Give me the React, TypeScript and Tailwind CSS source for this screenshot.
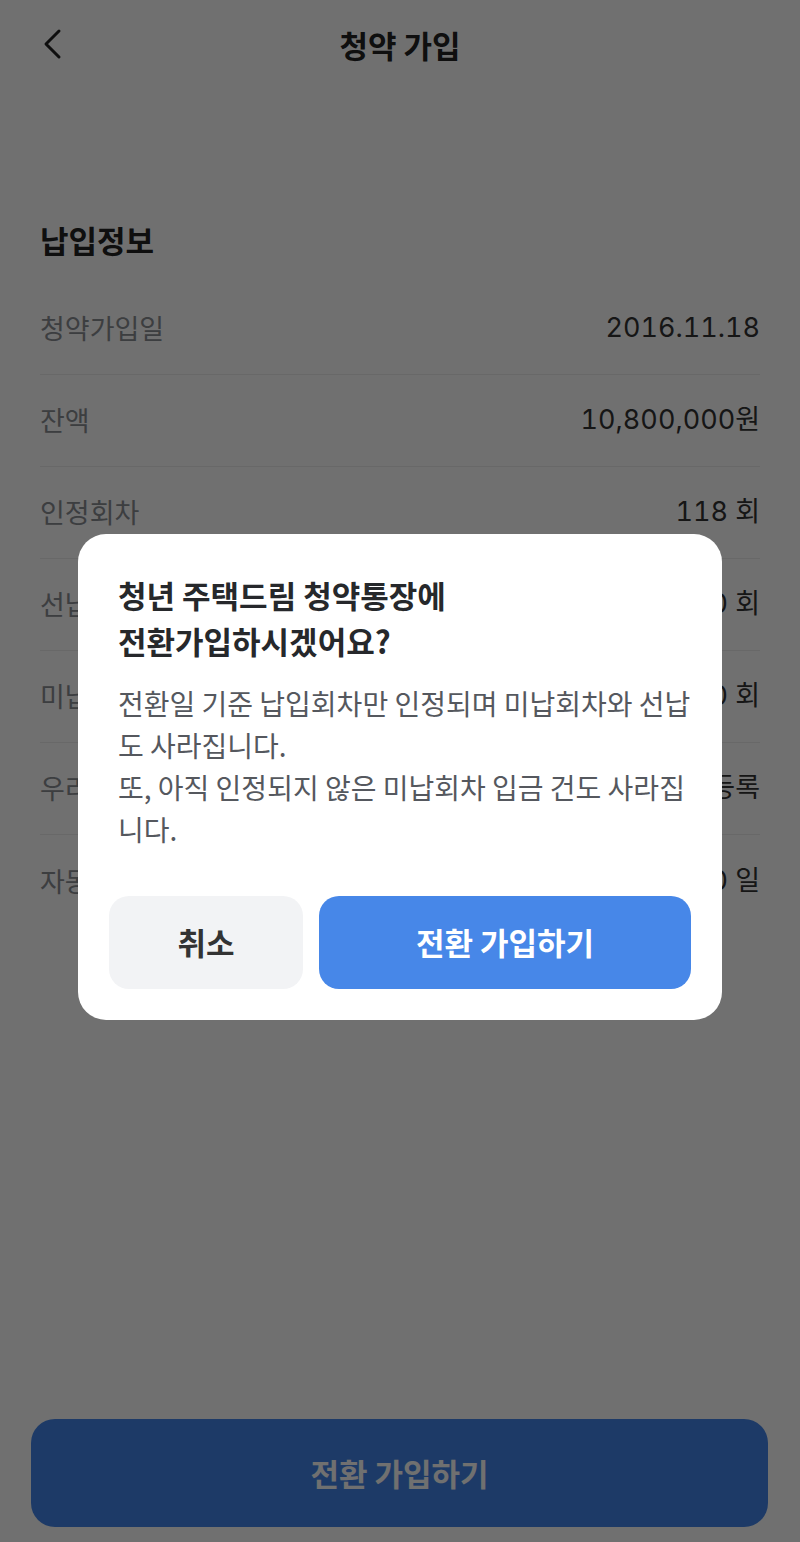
const rows = [
  { label: "청약가입일", value: "2016.11.18" },
  { label: "잔액", value: "10,800,000원" },
  { label: "인정회차", value: "118 회" },
  { label: "선납회차", value: "0 회" },
  { label: "미납회차", value: "0 회" },
  { label: "우리집 청약 알림", value: "미등록" },
  { label: "자동이체일", value: "10 일" },
];

function BackIcon() {
  return (
    <svg width="24" height="32" viewBox="0 0 24 32" fill="none">
      <path d="M19 3 L6 16 L19 29" stroke="#222" strokeWidth="3" strokeLinecap="round" strokeLinejoin="round" />
    </svg>
  );
}

export default function App() {
  return (
    <div className="relative h-[1542px] w-[800px] overflow-hidden bg-white font-['Noto_Sans_CJK_KR','Noto_Sans',sans-serif] text-[#222]">
      {/* page behind the dialog */}
      <header className="relative flex h-[88px] items-center justify-center">
        <button type="button" className="absolute left-[40px] top-[28px]">
          <BackIcon />
        </button>
        <h1 className="text-[31px] font-semibold leading-none">청약 가입</h1>
      </header>

      <section className="px-10 pt-[132px]">
        <h2 className="text-[31px] font-bold leading-[40px]">납입정보</h2>
        <ul className="mt-[23px]">
          {rows.map((row, i) => (
            <li
              key={row.label}
              className={`flex h-[92px] items-center justify-between ${i < rows.length - 1 ? "border-b border-[#ededed]" : ""}`}
            >
              <span className="whitespace-nowrap text-[27px] text-[#8a8d93]">{row.label}</span>
              <span className="whitespace-nowrap font-['Inter','Noto_Sans_CJK_KR',sans-serif] text-[27px] tabular-nums text-[#333]">
                {row.value}
              </span>
            </li>
          ))}
        </ul>
      </section>

      <div className="absolute bottom-[15px] left-[31px] right-[32px]">
        <button
          type="button"
          className="flex h-[108px] w-full items-center justify-center rounded-[24px] bg-[#4385ea] text-[31px] font-semibold text-white"
        >
          전환 가입하기
        </button>
      </div>

      {/* dim + dialog */}
      <div className="absolute inset-0 flex justify-center bg-black/[0.56] pt-[534px]">
        <div className="h-fit w-[644px] rounded-[28px] bg-white px-[31px] pb-[31px] pt-[38px]">
          <div className="whitespace-nowrap px-[9px]">
            <p className="text-[31px] font-bold leading-[46px] text-[#26282b]">
              청년 주택드림 청약통장에
              <br />
              전환가입하시겠어요?
            </p>
            <p className="mt-[18px] text-[28px] leading-[42px] text-[#55585e]">
              전환일 기준 납입회차만 인정되며 미납회차와 선납
              <br />
              도 사라집니다.
              <br />
              또, 아직 인정되지 않은 미납회차 입금 건도 사라집
              <br />
              니다.
            </p>
          </div>
          <div className="mt-[46px] flex gap-4">
            <button
              type="button"
              className="flex h-[93px] w-[194px] items-center justify-center rounded-[20px] bg-[#f2f3f5] text-[31px] font-bold text-[#333]"
            >
              취소
            </button>
            <button
              type="button"
              className="flex h-[93px] flex-1 items-center justify-center rounded-[20px] bg-[#4787e8] text-[31px] font-bold text-white"
            >
              전환 가입하기
            </button>
          </div>
        </div>
      </div>
    </div>
  );
}
